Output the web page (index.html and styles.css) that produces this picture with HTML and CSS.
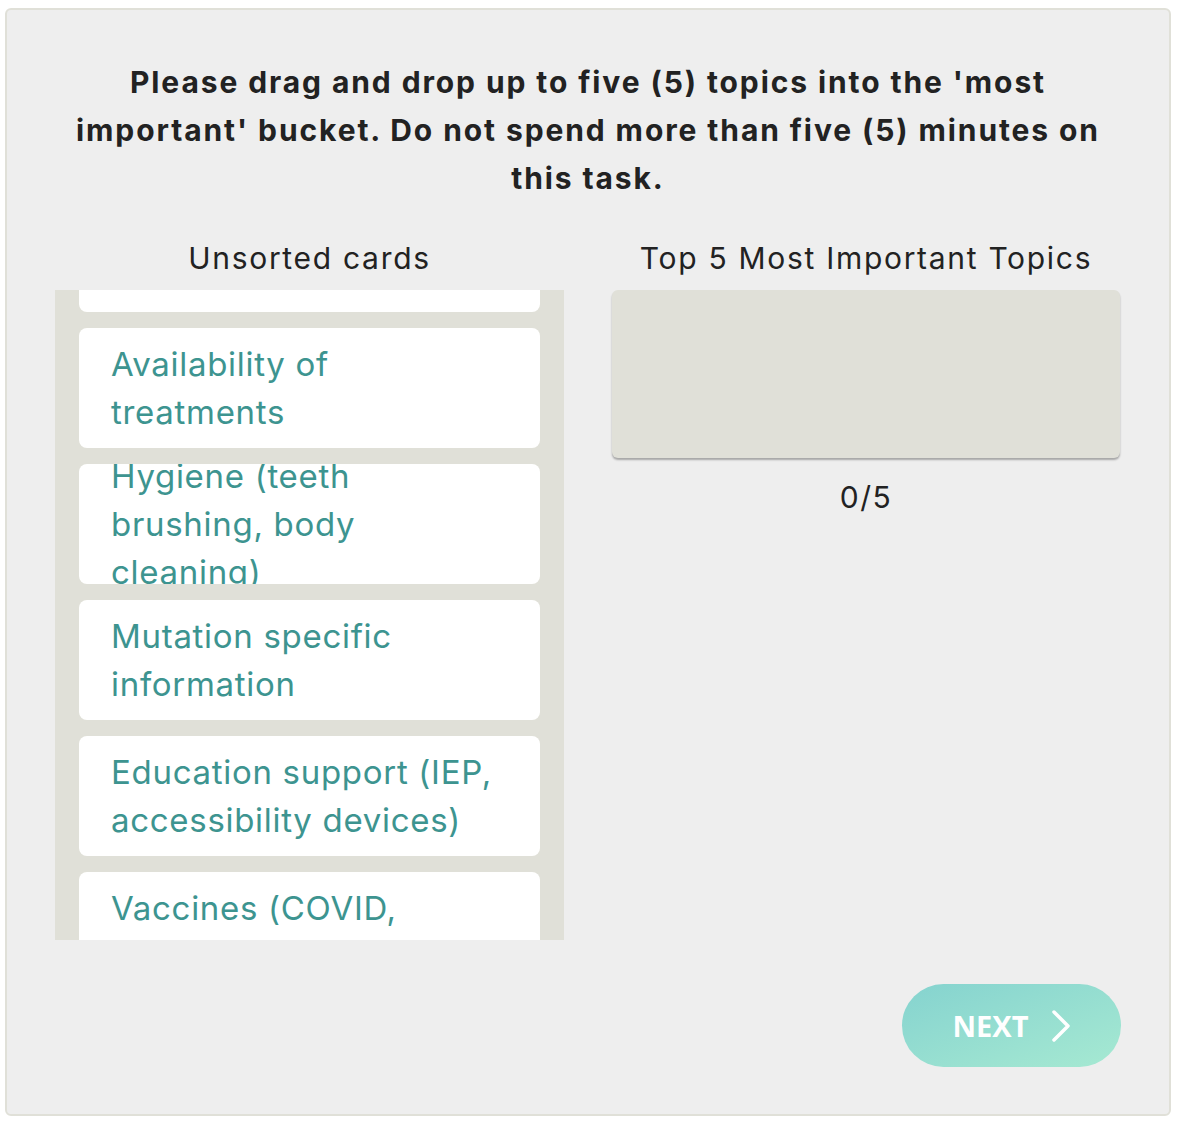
FILE: index.html
```html
<!DOCTYPE html>
<html>
<head>
    <title>Card Sort</title>
    <meta name="viewport" content="width=device-width, initial-scale=1">
    <link rel="stylesheet" href="styles.css">
</head>
<body>
    <div class="task">
        <h2 class="prompt">Please drag and drop up to five (5) topics into the 'most important' bucket. Do not spend more than five (5) minutes on this task.</h2>

        <div class="columns">
            <div class="column">
                <div class="column-title">Unsorted cards</div>
                <div class="card-list">
                    <div class="card-track">
                        <div class="sort-card"><span>Emotional and mental health</span></div>
                        <div class="sort-card"><span>Availability of treatments</span></div>
                        <div class="sort-card"><span>Hygiene (teeth brushing, body cleaning)</span></div>
                        <div class="sort-card"><span>Mutation specific information</span></div>
                        <div class="sort-card"><span>Education support (IEP, accessibility devices)</span></div>
                        <div class="sort-card"><span>Vaccines (COVID, measles)</span></div>
                    </div>
                </div>
            </div>

            <div class="column">
                <div class="column-title">Top 5 Most Important Topics</div>
                <div class="bucket"></div>
                <div class="count">0/5</div>
            </div>
        </div>

        <div class="footer">
            <button class="next-button">
                NEXT
                <svg width="22" height="34" viewBox="0 0 22 34">
                    <path d="M4 3 L18 17 L4 31" fill="none" stroke="#fff" stroke-width="3.5" stroke-linecap="round" stroke-linejoin="round"/>
                </svg>
            </button>
        </div>
    </div>
</body>
</html>
```

FILE: styles.css
```css
body {
    font-family: Inter, "Noto Sans", sans-serif;
    margin: 0;
    padding: 8px 8px 10px 5px;
    background: #fff;
    color: #222;
}
.task {
    background: #eeeeee;
    border: 2px solid #e0e0d8;
    border-radius: 6px;
    padding: 48px;
    height: 1108px;
    box-sizing: border-box;
    display: flex;
    flex-direction: column;
}
.prompt {
    margin: 0 0 32px 0;
    font-size: 30px;
    line-height: 48px;
    font-weight: 700;
    text-align: center;
    letter-spacing: 1.9px;
}
.columns {
    display: grid;
    grid-template-columns: 509px 508px;
    column-gap: 48px;
}
.column {
    display: flex;
    flex-direction: column;
    align-items: stretch;
}
.column-title {
    font-size: 30px;
    line-height: 48px;
    text-align: center;
    letter-spacing: 1.7px;
    margin-bottom: 8px;
}
.card-list {
    background: #e0e0d8;
    height: 650px;
    overflow: hidden;
    padding: 0 24px;
}
.card-track {
    margin-top: -98px;
    display: flex;
    flex-direction: column;
    gap: 16px;
}
.sort-card {
    background: #fff;
    border-radius: 8px;
    height: 120px;
    overflow: hidden;
    display: flex;
    align-items: center;
    padding: 0 32px;
}
.sort-card span {
    display: block;
    max-width: 385px;
    color: #3d9490;
    font-size: 33px;
    line-height: 48px;
    letter-spacing: 0.7px;
}
.bucket {
    background: #e0e0d8;
    height: 168px;
    border-radius: 6px;
    box-shadow: 0 2px 2px rgba(0,0,0,0.3);
}
.count {
    margin-top: 15px;
    font-size: 30px;
    line-height: 48px;
    letter-spacing: 1.5px;
    text-align: center;
}
.footer {
    margin-top: 44px;
    display: flex;
    justify-content: flex-end;
}
.next-button {
    width: 219px;
    height: 83px;
    border: none;
    border-radius: 42px;
    background: linear-gradient(160deg, #85d3cf 0%, #a6e9d2 100%);
    color: #fff;
    font-family: "Open Sans", sans-serif;
    font-weight: 700;
    font-size: 29px;
    display: flex;
    align-items: center;
    justify-content: center;
    gap: 22px;
    padding: 0 0 0 2px;
    cursor: pointer;
}
```
